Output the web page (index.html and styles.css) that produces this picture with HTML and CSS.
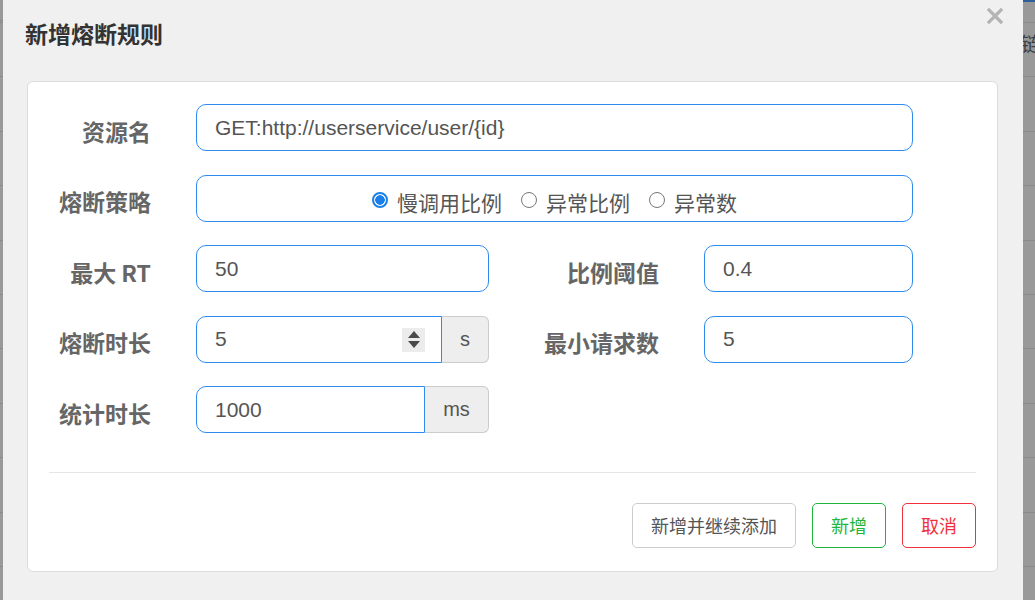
FILE: index.html
```html
<!DOCTYPE html>
<html lang="zh-CN">
<head>
<meta charset="utf-8">
<title>新增熔断规则</title>
<link rel="stylesheet" href="styles.css">
</head>
<body>
  <div class="strip strip-left"></div>
  <div class="modal">
    <div class="modal-header">
      <h3 class="modal-title">新增熔断规则</h3>
      <span class="close" aria-label="close">
        <svg width="16" height="16" viewBox="0 0 16 16"><path d="M2 2 L14 14 M14 2 L2 14" stroke="#b4b4b4" stroke-width="3.2" stroke-linecap="square" fill="none"/></svg>
      </span>
    </div>
    <div class="card">
      <div class="form">
        <label class="label">资源名</label>
        <div class="field span3"><input class="input" type="text" value="GET:http://userservice/user/{id}"></div>

        <label class="label">熔断策略</label>
        <div class="field span3">
          <div class="input radio-box">
            <span class="radio-item"><span class="radio checked"></span>慢调用比例</span>
            <span class="radio-item"><span class="radio"></span>异常比例</span>
            <span class="radio-item"><span class="radio"></span>异常数</span>
          </div>
        </div>

        <label class="label">最大 RT</label>
        <div class="field"><input class="input" type="text" value="50"></div>
        <label class="label">比例阈值</label>
        <div class="field"><input class="input" type="text" value="0.4"></div>

        <label class="label">熔断时长</label>
        <div class="field group">
          <div class="spin-wrap">
            <input class="input input-left" type="text" value="5">
            <span class="spinner"><span class="tri-up"></span><span class="tri-down"></span></span>
          </div>
          <span class="addon">s</span>
        </div>
        <label class="label">最小请求数</label>
        <div class="field"><input class="input" type="text" value="5"></div>

        <label class="label">统计时长</label>
        <div class="field group">
          <input class="input input-left" type="text" value="1000">
          <span class="addon addon-ms">ms</span>
        </div>
      </div>
      <hr class="divider">
      <div class="actions">
        <button class="btn btn-default">新增并继续添加</button>
        <button class="btn btn-success">新增</button>
        <button class="btn btn-danger">取消</button>
      </div>
    </div>
  </div>
  <div class="strip strip-right"><span class="peek">链</span></div>
</body>
</html>
```
FILE: styles.css
```css
* { box-sizing: border-box; }
html, body { margin: 0; padding: 0; }
body {
  width: 1035px;
  height: 600px;
  overflow: hidden;
  display: flex;
  font-family: "Liberation Sans", "Noto Sans CJK SC", sans-serif;
  background: #999;
}
.strip {
  background-color: #999;
  background-image: repeating-linear-gradient(to bottom, #8a8a8a 0, #8a8a8a 1px, transparent 1px, transparent 54.4px);
  background-position: 0 22px;
  height: 600px;
  flex: none;
}
.strip-left { width: 3px; }
.strip-right {
  width: 12px;
  border-top: 2px solid #2f5e9c;
  overflow: hidden;
  position: relative;
  background-position: 0 20px;
}
.peek {
  position: absolute;
  left: -2px;
  top: 31px;
  font-size: 20px;
  line-height: 22px;
  color: #3a3f4a;
  font-family: "Noto Sans CJK SC", sans-serif;
}
.modal {
  width: 1020px;
  height: 600px;
  flex: none;
  background: #f0f0f0;
  position: relative;
  padding: 0 25px 0 24px;
}
.modal-header { height: 81px; padding-top: 19px; }
.modal-title {
  margin: 0 0 0 -2px;
  font-size: 23px;
  line-height: 28px;
  font-weight: bold;
  color: #333;
  font-family: "Noto Sans CJK SC", sans-serif;
}
.close {
  position: absolute;
  top: 8px;
  right: 20px;
  width: 16px;
  height: 16px;
  display: block;
}
.close svg { display: block; }
.card {
  background: #fff;
  border: 1px solid #dcdcdc;
  border-radius: 6px;
  height: 491px;
  padding: 22px 21px 0 21px;
}
.form {
  display: grid;
  grid-template-columns: 147px 293px 215px 209px;
  grid-auto-rows: 47px;
  row-gap: 23.5px;
}
.label {
  display: flex;
  align-items: center;
  justify-content: flex-end;
  padding-right: 45px;
  padding-top: 6px;
  font-size: 23px;
  font-weight: bold;
  color: #666;
  font-family: "Noto Sans CJK SC", sans-serif;
  white-space: nowrap;
}
.field { display: flex; height: 47px; }
.span3 { grid-column: span 3; }
.input {
  width: 100%;
  height: 47px;
  border: 1px solid #2d8cf0;
  border-radius: 10px;
  padding: 0 18px;
  font-size: 21px;
  color: #555;
  font-family: "Liberation Sans", "Noto Sans CJK SC", sans-serif;
  background: #fff;
  outline: none;
}
.radio-box {
  display: flex;
  align-items: center;
  justify-content: center;
  padding-top: 8px;
  gap: 19px;
}
.radio-item {
  display: inline-flex;
  align-items: center;
  gap: 9px;
  font-size: 21px;
  color: #555;
  font-family: "Noto Sans CJK SC", sans-serif;
}
.radio {
  width: 16px;
  height: 16px;
  border-radius: 50%;
  border: 1px solid #767676;
  background: #fff;
  display: inline-block;
  margin-top: -4px;
}
.radio.checked {
  border: 2px solid #1a7fe8;
  background: radial-gradient(circle, #1a7fe8 0, #1a7fe8 4.5px, #fff 5px);
}
.spin-wrap { position: relative; width: 246px; flex: none; }
.group > .input-left { width: 229px; flex: none; }
.input-left { border-radius: 10px 0 0 10px; }
.spinner {
  position: absolute;
  right: 17px;
  top: 12px;
  width: 23px;
  height: 24px;
  background: #ececec;
  display: flex;
  flex-direction: column;
  align-items: center;
  justify-content: center;
  gap: 3px;
}
.tri-up, .tri-down {
  width: 0; height: 0;
  border-left: 6px solid transparent;
  border-right: 6px solid transparent;
}
.tri-up { border-bottom: 7px solid #4a4a4a; }
.tri-down { border-top: 7px solid #4a4a4a; }
.addon {
  width: 47px;
  flex: none;
  background: #eee;
  border: 1px solid #ccc;
  border-left: none;
  border-radius: 0 6px 6px 0;
  display: flex;
  align-items: center;
  justify-content: center;
  font-size: 20px;
  color: #555;
}
.addon-ms { width: 64px; }
.divider {
  margin: 38.5px 0 0 0;
  border: none;
  border-top: 1px solid #e5e5e5;
  height: 0;
}
.actions {
  display: flex;
  justify-content: flex-end;
  gap: 16px;
  margin-top: 30px;
}
.btn {
  height: 45px;
  padding: 0 18px;
  border-radius: 5px;
  background: #fff;
  font-size: 18px;
  font-family: "Noto Sans CJK SC", sans-serif;
  border: 1px solid #ccc;
  color: #555;
}
.btn-success { border-color: #1fb53c; color: #1fb53c; }
.btn-danger { border-color: #f0303c; color: #f0303c; }
```
